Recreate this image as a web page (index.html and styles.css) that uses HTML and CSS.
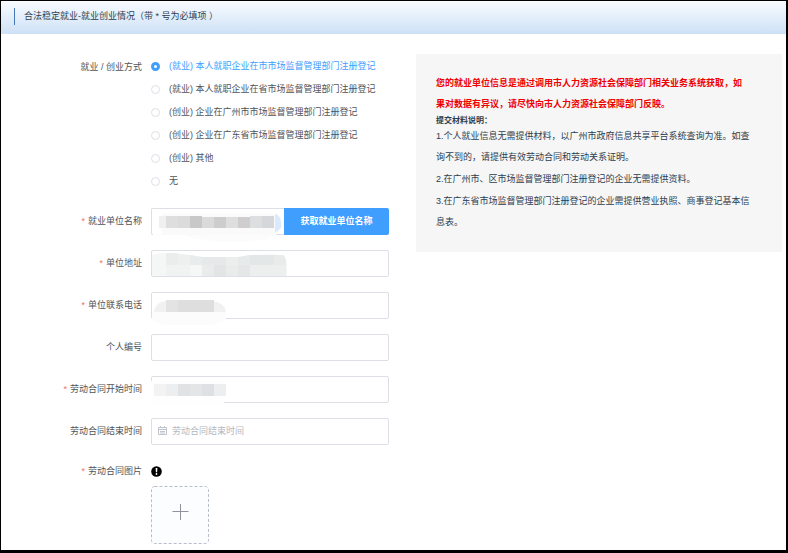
FILE: index.html
```html
<!DOCTYPE html>
<html lang="zh-CN">
<head>
<meta charset="utf-8">
<meta name="viewport" content="width=device-width, initial-scale=1">
<title>就业创业情况</title>
<link rel="stylesheet" href="styles.css">
</head>
<body>
<header class="bar">
  <h1 class="bar-title">合法稳定就业-就业创业情况（带 * 号为必填项 ）</h1>
</header>
<main class="content">
  <form class="form">
    <div class="row row-radios" role="radiogroup" aria-labelledby="mode">
      <span class="label" id="mode">就业 / 创业方式</span>
      <div class="radios">
        <label class="radio"><input type="radio" name="mode" checked><span>(就业) 本人就职企业在市市场监督管理部门注册登记</span></label>
        <label class="radio"><input type="radio" name="mode"><span>(就业) 本人就职企业在省市场监督管理部门注册登记</span></label>
        <label class="radio"><input type="radio" name="mode"><span>(创业) 企业在广州市市场监督管理部门注册登记</span></label>
        <label class="radio"><input type="radio" name="mode"><span>(创业) 企业在广东省市场监督管理部门注册登记</span></label>
        <label class="radio"><input type="radio" name="mode"><span>(创业) 其他</span></label>
        <label class="radio"><input type="radio" name="mode"><span>无</span></label>
      </div>
    </div>
    <div class="row">
      <label class="label required" for="company">就业单位名称</label>
      <div class="field field-group">
        <input class="input" id="company" type="text">
        <button class="fetch" type="button">获取就业单位名称</button>
        <svg class="mask" width="136" height="36" viewBox="0 0 136 36" aria-hidden="true">
          <path d="M2 26h124q-10 8-42 8-34 0-50-7H2z" fill="#fcfcfc"/>
          <path d="M12 6h114q6 7 2 18l-8 3H12q-6-10 0-21z" fill="#fafafa"/>
          <path d="M124 6q7 1 6 14l-6 5z" fill="#d9eaff"/>
          <path d="M8 8h7v12H8z" fill="#f0f0f0"/>
          <path d="M15 8h12v12H15z" fill="#dedede"/>
          <path d="M27 8h12v12H27z" fill="#dbdbdb"/>
          <path d="M39 8h12v12H39z" fill="#c8c8c8"/>
          <path d="M51 9h12v11H51z" fill="#dadada"/>
          <path d="M63 9h12v11H63z" fill="#cdcdcd"/>
          <path d="M75 9h12v11H75z" fill="#dedede"/>
          <path d="M87 9h12v11H87z" fill="#cfcdcd"/>
          <path d="M99 8h12v12H99z" fill="#dcdee0"/>
          <path d="M111 8h12v12h-12z" fill="#d5d7da"/>
        </svg>
      </div>
    </div>
    <div class="row">
      <label class="label required" for="address">单位地址</label>
      <div class="field">
        <input class="input" id="address" type="text">
        <svg class="mask" width="140" height="30" viewBox="0 0 140 30" aria-hidden="true">
          <path d="M1 5Q14 1 32 4l20 3h36q22-4 44-2 5 2 4 21H1z" fill="#f5f6f6"/>
          <path d="M15 3h12v12H15z" fill="#ebecec"/>
          <path d="M27 4l12 1v10H27z" fill="#eef0f0"/>
          <path d="M15 15h24v11H15z" fill="#f1f2f2"/>
          <path d="M39 5l12 2v8H39z" fill="#e9ecec"/>
          <path d="M51 7h24v8H51z" fill="#e6e9e9"/>
          <path d="M75 7h12v8H75z" fill="#eceeee"/>
          <path d="M87 7l12-2v10H87z" fill="#e7eaea"/>
          <path d="M99 5h24v10H99z" fill="#e3e7e7"/>
          <path d="M123 5h9q3 1 3 10h-12z" fill="#e9ebeb"/>
          <path d="M51 15h12v11H51z" fill="#eaecec"/>
          <path d="M63 15h12v11H63z" fill="#e1e5e5"/>
          <path d="M75 15h12v11H75z" fill="#eaecec"/>
          <path d="M87 15h12v11H87z" fill="#e3e7e7"/>
          <path d="M99 15h36v11H99z" fill="#edeeee"/>
        </svg>
      </div>
    </div>
    <div class="row">
      <label class="label required" for="phone">单位联系电话</label>
      <div class="field">
        <input class="input" id="phone" type="text">
        <svg class="mask" width="80" height="36" viewBox="0 0 80 36" aria-hidden="true">
          <path d="M1 20h74v8q-8 5-20 5H14Q4 32 1 26z" fill="#fcfcfc"/>
          <path d="M3 20q1-10 12-11h46q12 1 14 11z" fill="#f1f1f1"/>
          <path d="M15 8h12v12H15z" fill="#e3e3e3"/>
          <path d="M27 8h36v12H27z" fill="#dedede"/>
        </svg>
      </div>
    </div>
    <div class="row">
      <label class="label" for="number">个人编号</label>
      <div class="field"><input class="input" id="number" type="text"></div>
    </div>
    <div class="row">
      <label class="label required" for="start">劳动合同开始时间</label>
      <div class="field">
        <input class="input" id="start" type="text">
        <svg class="mask" width="80" height="32" viewBox="0 0 80 32" aria-hidden="true">
          <path d="M0 5h73v23H0z" fill="#fefefe"/>
          <path d="M3 8h12v12H3z" fill="#f3f3f3"/>
          <path d="M15 8h12v12H15z" fill="#edeeef"/>
          <path d="M27 8h12v12H27z" fill="#e1e2e4"/>
          <path d="M39 8h12v12H39z" fill="#e4e5e7"/>
          <path d="M51 8h12v12H51z" fill="#dfe0e3"/>
          <path d="M63 8h12v12H63z" fill="#edeeef"/>
        </svg>
      </div>
    </div>
    <div class="row">
      <label class="label" for="end">劳动合同结束时间</label>
      <div class="field">
        <input class="input input-date" id="end" type="text" placeholder="劳动合同结束时间">
        <svg class="calendar" width="9" height="9" viewBox="0 0 9 9" fill="none" stroke="#c0c4cc" aria-hidden="true">
          <path d="M.5 1.5h8v7h-8zM.5 3.5h8M2.5 0v2M6.5 0v2M2 5.5h5M2 7h5"/>
        </svg>
      </div>
    </div>
    <div class="row">
      <span class="label required">劳动合同图片</span>
      <div class="field field-info">
        <svg width="11" height="11" viewBox="0 0 11 11" role="img" aria-label="说明">
          <circle cx="5.5" cy="5.5" r="5.3" fill="#000"/>
          <path d="M4.6 2h1.8l-.3 4.3H4.9z" fill="#fff"/><circle cx="5.5" cy="8" r=".9" fill="#fff"/>
        </svg>
      </div>
    </div>
    <button class="upload" type="button" aria-label="上传图片">
      <svg width="58" height="58" viewBox="0 0 58 58" fill="none" aria-hidden="true">
        <rect x=".5" y=".5" width="57" height="57" rx="3" fill="#fbfdff" stroke="#b8bec9" stroke-dasharray="3 2"/>
        <path d="M29.5 18v16M21.5 25.5h16" stroke="#8c939d"/>
      </svg>
    </button>
  </form>
  <aside class="notice">
    <p class="warning">您的就业单位信息是通过调用市人力资源社会保障部门相关业务系统获取，如<br>果对数据有异议，请尽快向市人力资源社会保障部门反映。</p>
    <h2 class="notice-title">提交材料说明：</h2>
    <div class="notice-list">
      <p>1.个人就业信息无需提供材料，以广州市政府信息共享平台系统查询为准。如查<br>询不到的，请提供有效劳动合同和劳动关系证明。</p>
      <p>2.在广州市、区市场监督管理部门注册登记的企业无需提供资料。</p>
      <p>3.在广东省市场监督管理部门注册登记的企业需提供营业执照、商事登记基本信<br>息表。</p>
    </div>
  </aside>
</main>
</body>
</html>
```
FILE: styles.css
```css
* {
  box-sizing: border-box;
}

body {
  margin: 0;
  min-height: 100vh;
  border: solid #000;
  border-width: 1px 2px 3px 1px;
  background: #fff;
  color: #505358;
  font: 9px/21px "Liberation Sans", "Noto Sans CJK SC", sans-serif;
}

h1, h2, p {
  margin: 0;
  font-size: inherit;
  font-weight: inherit;
}

input, button {
  margin: 0;
  font: inherit;
}

.bar {
  height: 33px;
  padding: 7px 13px;
  background: linear-gradient(#f8fbff, #cee1f6);
}

.bar-title {
  padding-left: 9px;
  border-left: 1px solid #4679b8;
  color: #2c3e50;
  line-height: 17px;
}

.content {
  display: grid;
  grid-template-columns: minmax(0, 388fr) minmax(0, 366fr);
  gap: 27px;
  align-items: start;
  padding: 20px 4px 6px 0;
}

.form {
  display: flex;
  flex-direction: column;
  gap: 15px;
  padding-top: 1px;
}

.row {
  display: flex;
  gap: 9px;
  align-items: center;
}

.row-radios {
  align-items: flex-start;
}

.label {
  flex: 0 0 141px;
  text-align: right;
}

.row-radios .label {
  line-height: 25px;
}

.required::before {
  content: "*";
  margin-right: 3px;
  color: #f56c6c;
}

.radios {
  flex: 1;
}

.radio {
  display: flex;
  gap: 9px;
  align-items: center;
  height: 23px;
  white-space: nowrap;
}

.radio input {
  appearance: none;
  width: 9px;
  height: 9px;
  border: 1px solid #dcdfe6;
  border-radius: 50%;
  background: #fff;
}

.radio input:checked {
  border: 3px solid #409eff;
}

.radio input:checked + span {
  color: #409eff;
}

.field {
  position: relative;
  display: flex;
  flex: 1;
  min-width: 0;
  height: 27px;
}

.input {
  flex: 1;
  min-width: 0;
  padding: 0 7px;
  border: 1px solid #dcdfe6;
  border-radius: 2px;
  background: #fff;
  color: #606266;
}

.input-date {
  padding-left: 20px;
}

.input::placeholder {
  color: #b4b8c0;
  opacity: 1;
}

.field-group .input {
  border-right: 0;
  border-radius: 2px 0 0 2px;
}

.fetch {
  flex: 0 0 105px;
  padding: 0;
  border: 0;
  border-radius: 0 2px 2px 0;
  background: #409eff;
  color: #fff;
  font-weight: bold;
}

.mask {
  position: absolute;
  top: 0;
  left: 0;
  pointer-events: none;
}

.calendar {
  position: absolute;
  top: 8px;
  left: 7px;
}

.field-info {
  align-items: center;
  height: 23px;
}

.upload {
  display: flex;
  align-self: flex-start;
  margin: -12px 0 0 150px;
  padding: 0;
  border: 0;
  background: none;
}

.notice {
  padding: 19px 20px;
  background: #f6f6f6;
  color: #2c3e50;
}

.warning {
  color: #f00000;
  font-weight: bold;
}

.notice-title {
  font-size: 8px;
  font-weight: bold;
  line-height: 11px;
}

.notice-list {
  display: grid;
  gap: 1px;
}
```
